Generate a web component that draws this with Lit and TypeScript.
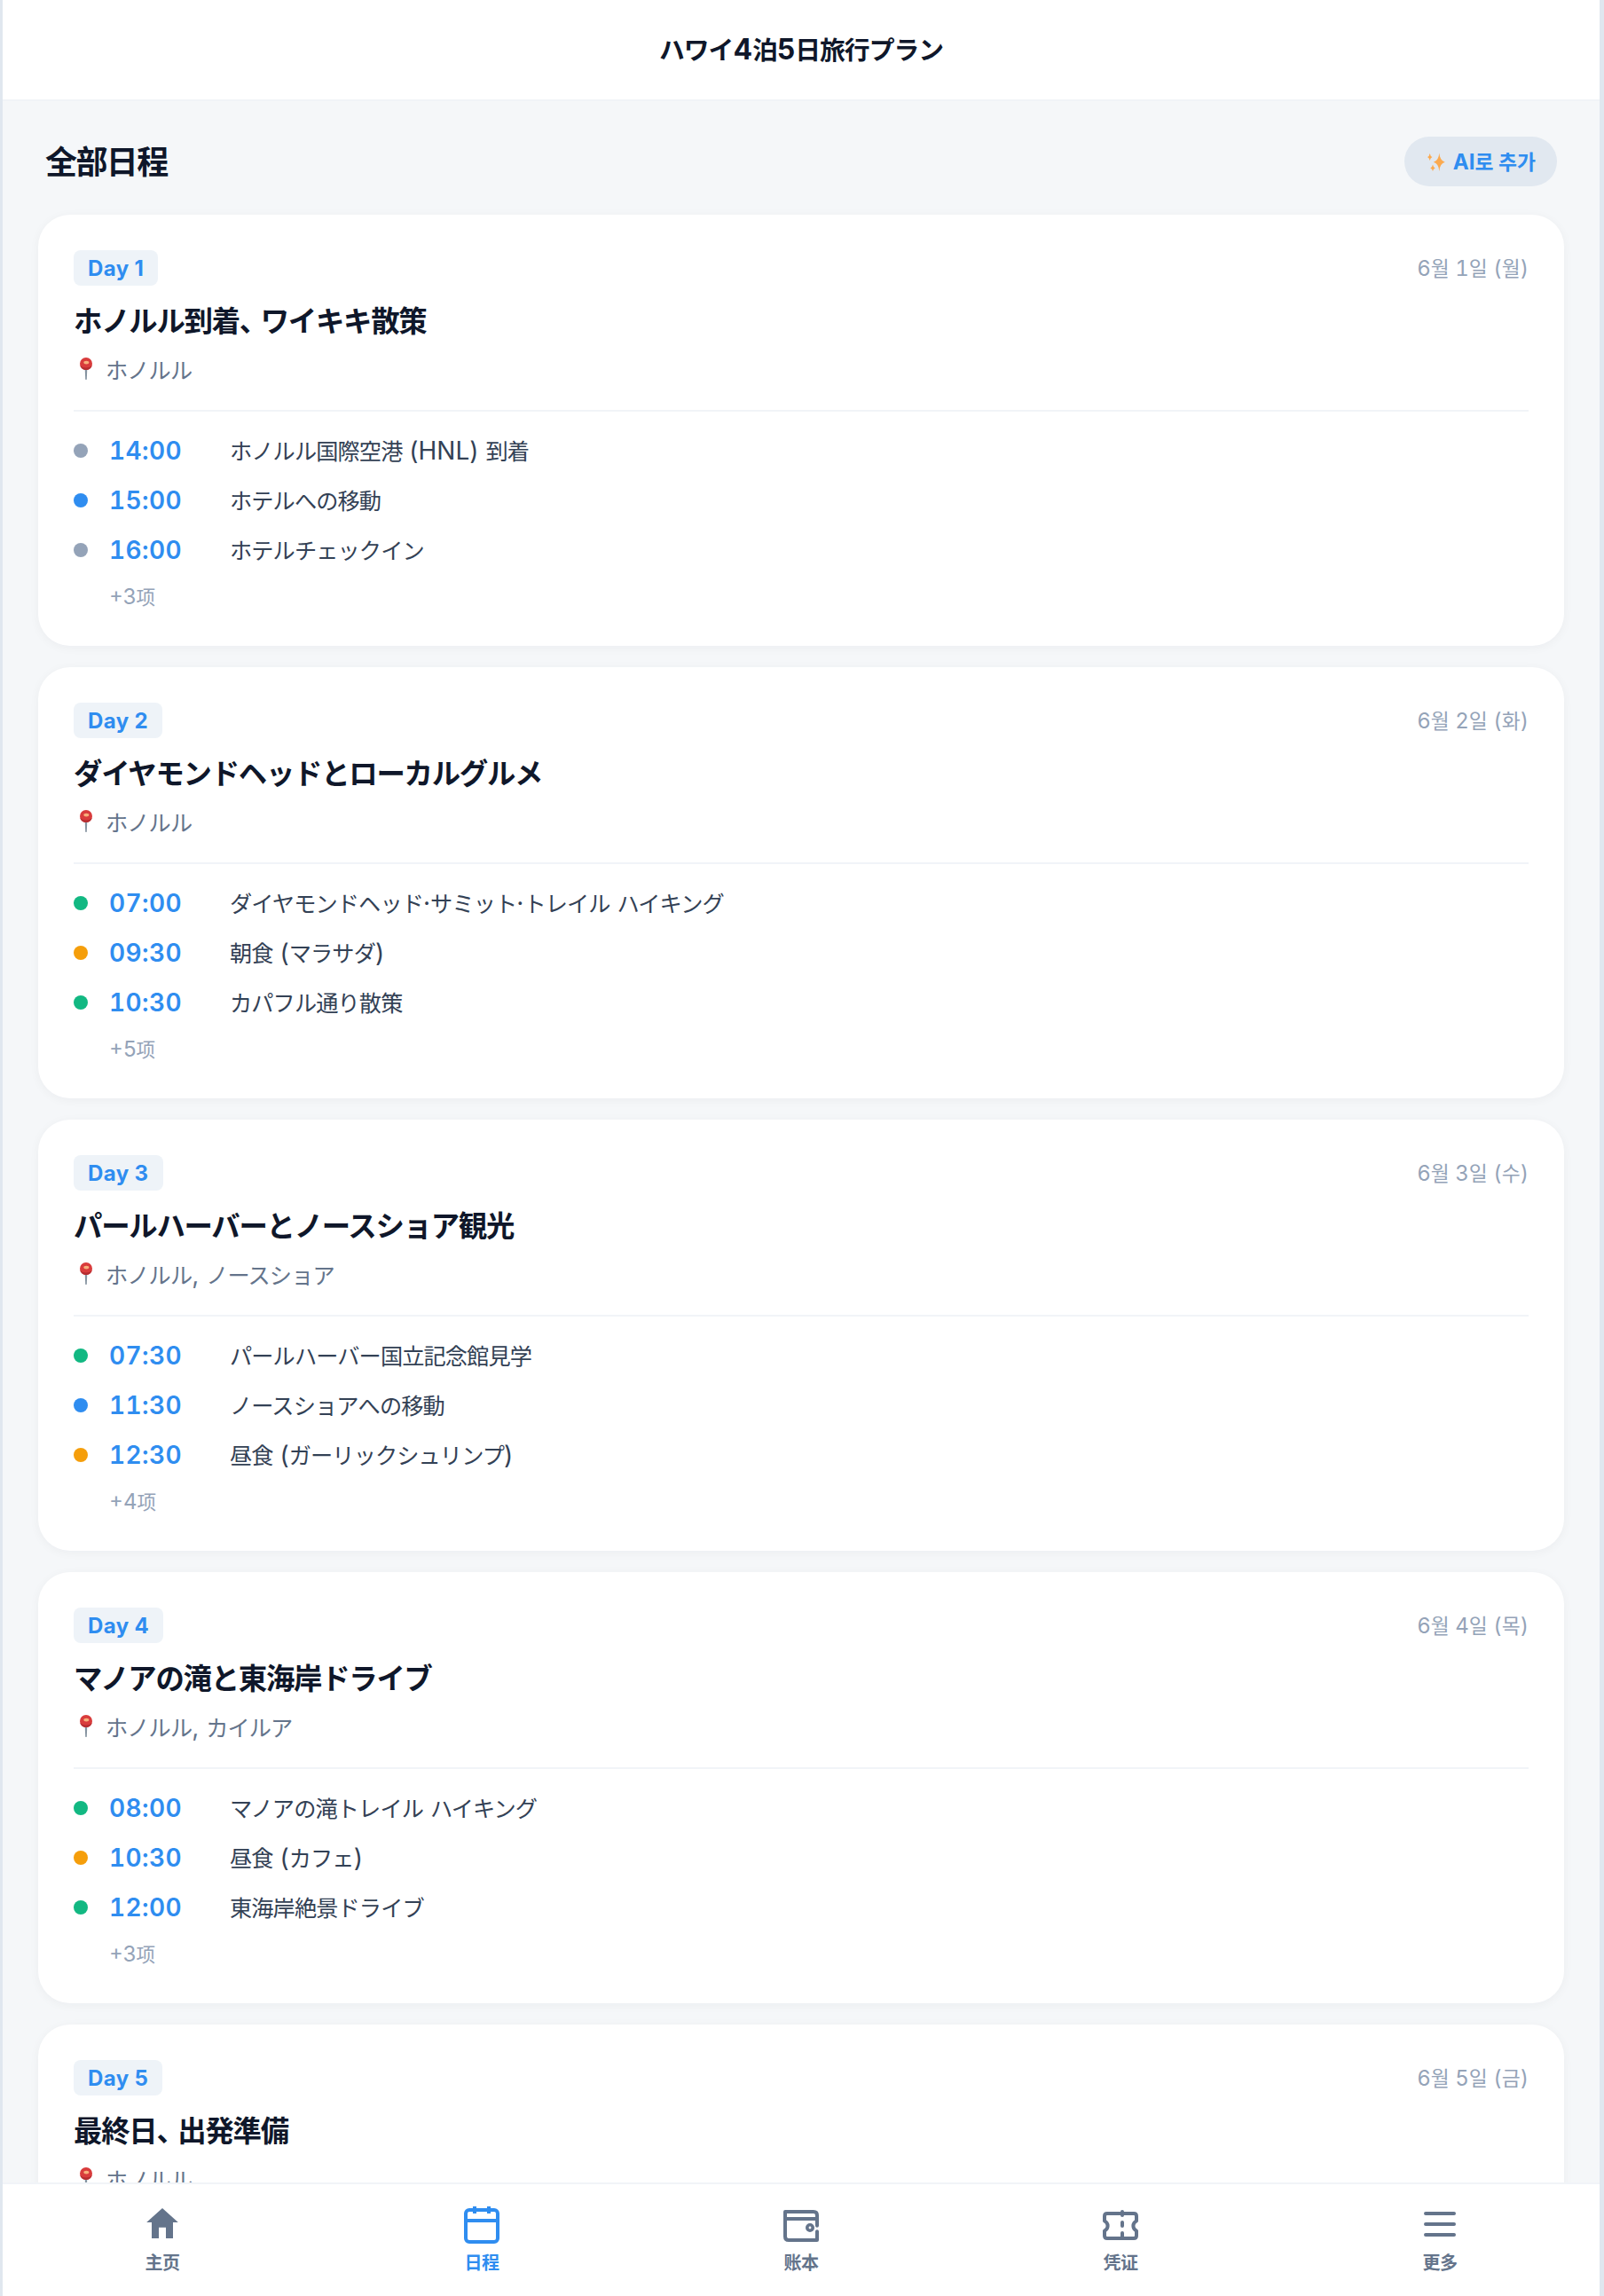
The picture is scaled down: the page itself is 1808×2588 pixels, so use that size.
import { LitElement, html, css, svg } from "lit";
import { customElement, property } from "lit/decorators.js";

type Kind = "etc" | "move" | "sight" | "food";
interface Item { time: string; kind: Kind; text: string }
interface Day { n: number; date: string; title: string; place: string; items: Item[]; more: number }

const DAYS: Day[] = [
  { n: 1, date: "6월 1일 (월)", title: "ホノルル到着、ワイキキ散策", place: "ホノルル", more: 3, items: [
    { time: "14:00", kind: "etc", text: "ホノルル国際空港 (HNL) 到着" },
    { time: "15:00", kind: "move", text: "ホテルへの移動" },
    { time: "16:00", kind: "etc", text: "ホテルチェックイン" } ] },
  { n: 2, date: "6월 2일 (화)", title: "ダイヤモンドヘッドとローカルグルメ", place: "ホノルル", more: 5, items: [
    { time: "07:00", kind: "sight", text: "ダイヤモンドヘッド·サミット·トレイル ハイキング" },
    { time: "09:30", kind: "food", text: "朝食 (マラサダ)" },
    { time: "10:30", kind: "sight", text: "カパフル通り散策" } ] },
  { n: 3, date: "6월 3일 (수)", title: "パールハーバーとノースショア観光", place: "ホノルル, ノースショア", more: 4, items: [
    { time: "07:30", kind: "sight", text: "パールハーバー国立記念館見学" },
    { time: "11:30", kind: "move", text: "ノースショアへの移動" },
    { time: "12:30", kind: "food", text: "昼食 (ガーリックシュリンプ)" } ] },
  { n: 4, date: "6월 4일 (목)", title: "マノアの滝と東海岸ドライブ", place: "ホノルル, カイルア", more: 3, items: [
    { time: "08:00", kind: "sight", text: "マノアの滝トレイル ハイキング" },
    { time: "10:30", kind: "food", text: "昼食 (カフェ)" },
    { time: "12:00", kind: "sight", text: "東海岸絶景ドライブ" } ] },
  { n: 5, date: "6월 5일 (금)", title: "最終日、出発準備", place: "ホノルル", more: 2, items: [] },
];

/* Splits a string into script runs so each script gets its own metrics. */
const RUNS = /[\u3003-\u30ff\u4e00-\u9fff]+|\u3001|[\uac00-\ud7af]+|[^\u3001\u3003-\u30ff\u4e00-\u9fff\uac00-\ud7af]+/g;
const runs = (text: string) => (text.match(RUNS) ?? []).map((r) => {
  if (r === "、") return html`<span class="cjk comma">${r}</span>`;
  if (/^[\uac00-\ud7af]/.test(r)) return html`<span class="kr">${r}</span>`;
  if (/^[\u3003-\u30ff\u4e00-\u9fff]/.test(r)) return html`<span class="cjk">${r}</span>`;
  return r;
});

const scripts = css`
  .cjk { font-size: 0.9em; letter-spacing: -0.035em; line-height: 0; }
  .cn { font-family: "Noto Sans CJK SC", sans-serif; }
  .comma { letter-spacing: -0.23em; }
  .kr { font-family: "Noto Sans CJK KR", sans-serif; font-size: 0.95em; line-height: 0; }
`;

const pin = svg`<svg width="26" height="28" viewBox="0 0 26 28"><path d="M12.700 12h2.600l-.5 12.600q-.8 1-1.600 0z" fill="#8593a0"/><circle cx="14" cy="7" r="7" fill="#d93c3c"/><path d="M7.300 9a7 7 0 0 0 13.400 0q-2.700 2.600-6.700 2.600t-6.700-2.600z" fill="#b52d31"/><ellipse cx="14.300" cy="5.600" rx="3" ry="1.900" fill="#f7b07c"/></svg>`;
const sparkles = svg`<svg width="20" height="22" viewBox="0 0 20 22" fill="#fbaa50"><path d="M13.300 1.500q.7 8.700 6.400 10.200q-5.700 1.500-6.400 10.200q-.7-8.700-6.400-10.200q5.700-1.500 6.400-10.200z"/><path d="M2.700 2q.5 3.200 2.700 4q-2.200.8-2.700 4q-.5-3.200-2.700-4q2.200-.8 2.700-4z"/><path d="M6 14.600q.5 3 2.700 3.800q-2.200.8-2.700 3.600q-.5-2.800-2.700-3.600q2.200-.8 2.700-3.800z"/></svg>`;

@customElement("day-card")
export class DayCard extends LitElement {
  @property({ attribute: false }) day!: Day;
  static styles = [scripts, css`
    :host { display: block; height: 486px; box-sizing: border-box; padding: 40px; background: #fff; border-radius: 36px;
      box-shadow: 0 2px 12px rgba(15, 23, 42, 0.045); flex: none; }
    .top { display: flex; justify-content: space-between; align-items: center; height: 40px; }
    .pill { box-sizing: border-box; height: 40px; padding: 0 16px; border-radius: 8px; background: #eef3f8; color: #2f8df0;
      font-size: 24px; font-weight: 700; line-height: 41px; letter-spacing: 0.4px; }
    .date { color: #94a3b8; font-size: 24px; line-height: 41px; font-variant-numeric: tabular-nums; }
    .title { margin-top: 15px; color: #0f172a; font-size: 36px; font-weight: 700; line-height: 48px; white-space: nowrap; }
    .title .cjk { letter-spacing: -0.039em; }
    .title .comma { letter-spacing: -0.26em; }
    .place { margin-top: 16px; display: flex; align-items: center; height: 32px; color: #64748b; font-size: 28px; line-height: 32px; white-space: nowrap; }
    .place svg { margin-right: 10px; flex: none; }
    .items { margin-top: 29px; border-top: 2px solid #f1f4f8; padding-top: 16px; display: flex; flex-direction: column; }
    .row { display: flex; align-items: center; height: 56px; line-height: 56px; }
    .dot { width: 16px; height: 16px; border-radius: 50%; }
    .etc { background: #94a3b8; } .move { background: #2f8df0; } .sight { background: #12b882; } .food { background: #f59e0b; }
    .time { margin-left: 24px; width: 136px; color: #2f8df0; font-size: 28px; font-weight: 600; font-variant-numeric: tabular-nums; letter-spacing: 0.4px; }
    .text { color: #334155; font-size: 28px; white-space: nowrap; }
    .more { padding-left: 40px; color: #94a3b8; font-size: 24px; line-height: 50px; }
  `];
  render() {
    const d = this.day;
    return html`
      <div class="top"><span class="pill">Day ${d.n}</span><span class="date">${runs(d.date)}</span></div>
      <div class="title">${runs(d.title)}</div>
      <div class="place">${pin}<span>${runs(d.place)}</span></div>
      <div class="items">
        ${d.items.map((i) => html`<div class="row"><i class="dot ${i.kind}"></i><span class="time">${i.time}</span><span class="text">${runs(i.text)}</span></div>`)}
        <div class="more">+${d.more}<span class="cjk cn">项</span></div>
      </div>`;
  }
}

const ICONS = {
  home: svg`<path d="M24 7L6.200 23H12v18h8V28.700h8V41h8V23h5.800z" fill="currentColor"/>`,
  calendar: svg`<rect x="6" y="9" width="36" height="36" rx="4"/><path d="M6 21h36M16 5v8M32 5v8" stroke-linecap="butt"/>`,
  wallet: svg`<path d="M6 19V11H38q4 0 4 4v11.700M42 33.300V43H10q-4 0-4-4V19h36"/><circle cx="34" cy="29" r="3.200" stroke-width="3.600"/>`,
  ticket: svg`<path d="M6 16q0-3 3-3h30q3 0 3 3v5.500a6 6 0 0 0 0 11V38q0 3-3 3H9q-3 0-3-3v-5.500a6 6 0 0 0 0-11z"/><path d="M26 11v4M26 23v4M26 35v5"/>`,
  menu: svg`<path d="M8 13h32M8 25h32M8 37h32"/>`,
};

@customElement("app-root")
export class AppRoot extends LitElement {
  static styles = [scripts, css`
    :host { display: block; height: 2588px; overflow: hidden; box-sizing: border-box; padding: 0 5px 0 3px; background: #e0e7ef;
      font-family: Inter, "Noto Sans CJK JP", sans-serif; }
    .app { height: 100%; display: flex; flex-direction: column; background: #f5f7f9; }
    header { flex: none; box-sizing: border-box; height: 114px; background: #fff; border-bottom: 2px solid #f1f4f7; color: #0f172a;
      text-align: center; font-size: 32px; font-weight: 700; line-height: 112px; }
    main { flex: 1; min-height: 0; overflow: hidden; padding: 0 40px; display: flex; flex-direction: column; gap: 24px; }
    .head { flex: none; height: 104px; padding: 32px 8px 0; box-sizing: border-box; display: flex; justify-content: space-between; align-items: center; }
    h1 { margin: 0; color: #0f172a; font-size: 40px; font-weight: 700; line-height: 56px; }
    h1 .cjk { letter-spacing: -0.045em; }
    .ai { display: flex; align-items: center; justify-content: space-between; box-sizing: border-box; width: 172px; height: 56px; line-height: 57px;
      padding: 0 24px 0 26px; border-radius: 28px; background: #e1e8f0; color: #2f8df0; font-size: 24px; font-weight: 700; white-space: nowrap; }
    nav { flex: none; height: 128px; box-sizing: border-box; border-top: 2px solid #f1f4f8; background: #fff; display: flex; }
    .tab { flex: 1; display: flex; flex-direction: column; align-items: center; padding-top: 20px; color: #64748b; }
    .active { color: #2f8df0; }
    .icon { width: 48px; height: 48px; fill: none; stroke: currentColor; stroke-width: 4; stroke-linecap: round; stroke-linejoin: round; }
    .solid { stroke: none; }
    .label { font-family: "Noto Sans CJK SC", sans-serif; font-size: 20px; font-weight: 600; line-height: 40px; letter-spacing: -0.5px; white-space: nowrap; }
  `];
  tab(label: string, icon: unknown, mode = "") {
    return html`<div class="tab ${mode === "active" ? "active" : ""}"><svg class="icon ${mode === "solid" ? "solid" : ""}" viewBox="0 0 48 48">${icon}</svg><div class="label">${label}</div></div>`;
  }
  render() {
    return html`<div class="app">
      <header>${runs("ハワイ4泊5日旅行プラン")}</header>
      <main><div class="head"><h1><span class="cjk cn">全部日程</span></h1><div class="ai">${sparkles}<span>${runs("AI로 추가")}</span></div></div>
      ${DAYS.map((d) => html`<day-card .day=${d}></day-card>`)}</main>
      <nav>${this.tab("主页", ICONS.home, "solid")}${this.tab("日程", ICONS.calendar, "active")}${this.tab("账本", ICONS.wallet)}${this.tab("凭证", ICONS.ticket)}${this.tab("更多", ICONS.menu)}</nav>
    </div>`;
  }
}
